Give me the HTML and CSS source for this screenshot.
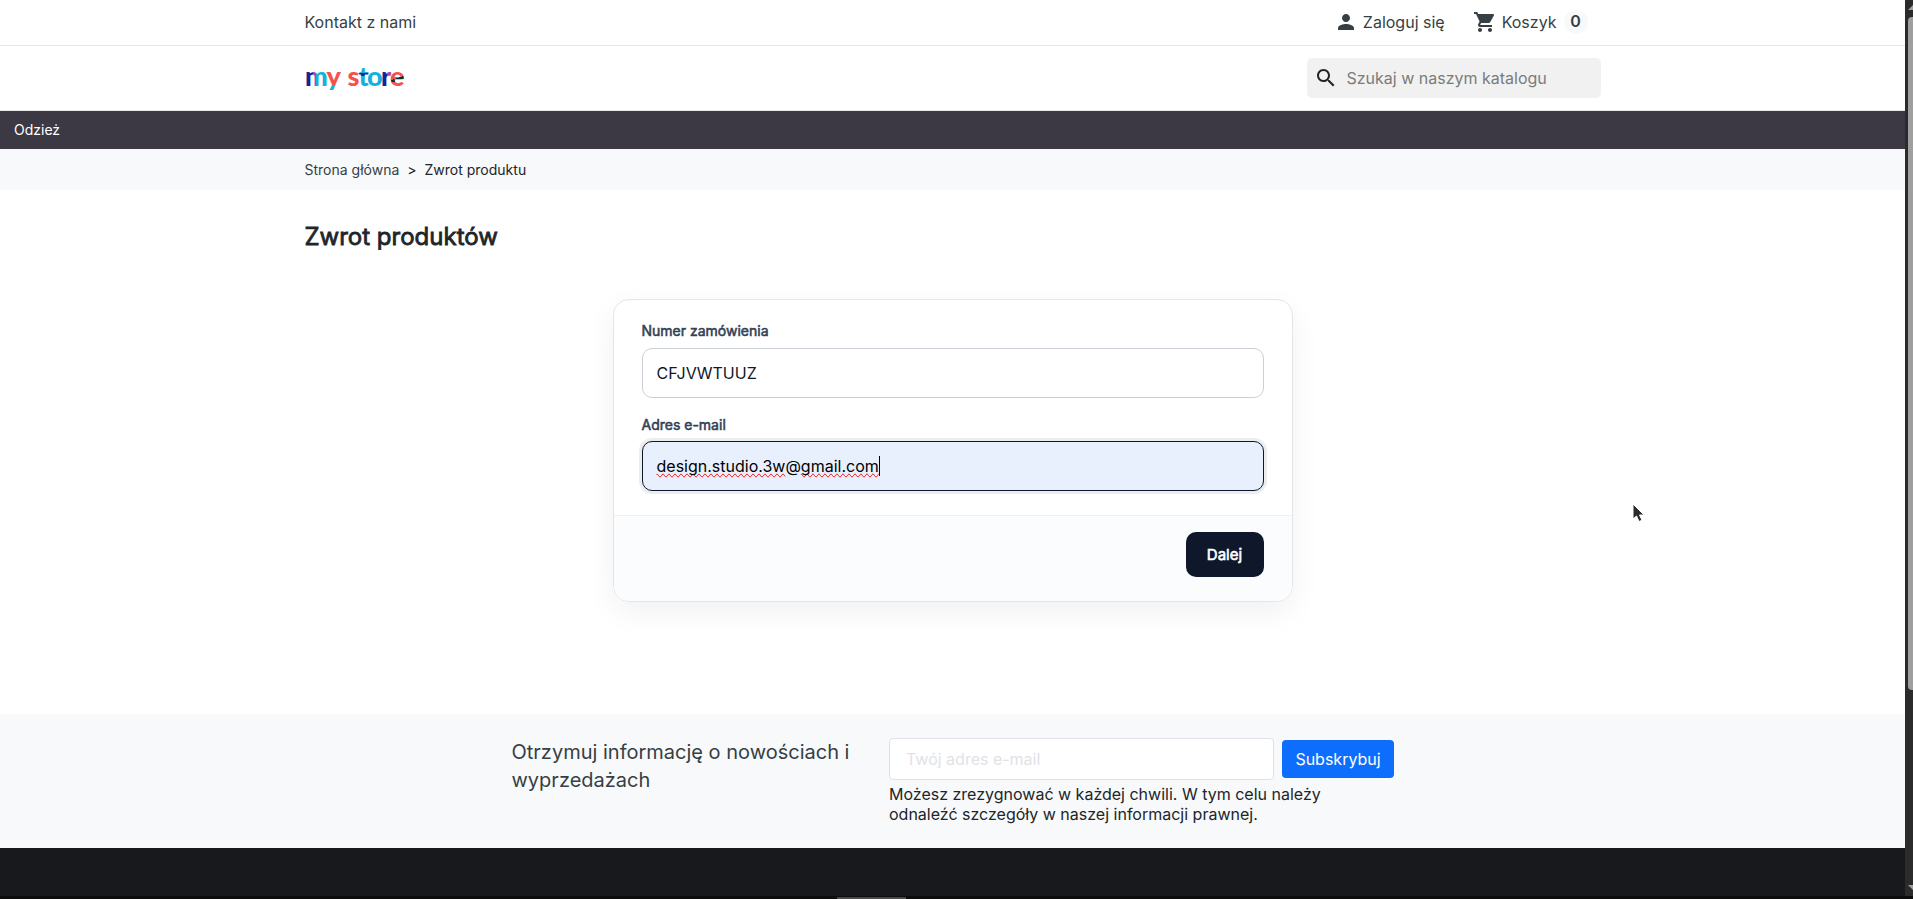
FILE: index.html
```html
<!DOCTYPE html>
<html lang="pl">
<head>
  <meta charset="UTF-8">
  <meta name="viewport" content="width=device-width, initial-scale=1.0">
  <title>Zwrot produktów</title>
  <link rel="stylesheet" href="styles.css">
</head>
<body>
  <div class="window">
    <div class="page">
      <div class="topbar">
        <div class="container">
          <a href="#" class="contact">Kontakt z nami</a>
          <div class="user-links">
            <a href="#" class="login">
              <svg class="icon" viewBox="0 0 24 24"><path d="M12 12c2.21 0 4-1.79 4-4s-1.79-4-4-4-4 1.79-4 4 1.79 4 4 4zm0 2c-2.67 0-8 1.34-8 4v2h16v-2c0-2.66-5.33-4-8-4z"/></svg>
              <span>Zaloguj się</span>
            </a>
            <a href="#" class="cart">
              <svg class="icon" viewBox="0 0 24 24"><path d="M7 18c-1.1 0-1.99.9-1.99 2S5.900 22 7 22s2-.9 2-2-.9-2-2-2zM1 2v2h2l3.600 7.590-1.350 2.450c-.160.280-.250.610-.250.960 0 1.100.9 2 2 2h12v-2H7.420c-.140 0-.250-.110-.250-.250l.030-.120.900-1.630h7.450c.750 0 1.410-.410 1.750-1.030l3.580-6.490c.080-.140.120-.310.120-.480 0-.550-.450-1-1-1H5.210l-.940-2H1zm16 16c-1.100 0-1.990.9-1.990 2s.890 2 1.990 2 2-.9 2-2-.9-2-2-2z"/></svg>
              <span>Koszyk</span>
              <span class="count">0</span>
            </a>
          </div>
        </div>
      </div>

      <header class="header">
        <div class="container">
          <a href="#" class="logo">
            <svg width="104" height="44" viewBox="0 0 104 44">
              <defs>
                <linearGradient id="g-m"><stop offset=".34" stop-color="#12259a"/><stop offset=".34" stop-color="#b23fbf"/><stop offset=".5" stop-color="#b23fbf"/><stop offset=".5" stop-color="#12b2dd"/></linearGradient>
                <linearGradient id="g-y" gradientUnits="userSpaceOnUse" x1="0" y1="14" x2="0" y2="38"><stop offset=".62" stop-color="#f5504c"/><stop offset=".62" stop-color="#12b2dd"/></linearGradient>
                <linearGradient id="g-t" gradientUnits="userSpaceOnUse" x1="0" y1="9" x2="0" y2="29"><stop offset=".38" stop-color="#12b2dd"/><stop offset=".38" stop-color="#12259a"/><stop offset=".54" stop-color="#12259a"/><stop offset=".54" stop-color="#12b2dd"/></linearGradient>
                <linearGradient id="g-r"><stop offset=".5" stop-color="#12259a"/><stop offset=".5" stop-color="#b23fbf"/></linearGradient>
                <linearGradient id="g-e" gradientUnits="userSpaceOnUse" x1="90" y1="18" x2="94" y2="30"><stop offset=".36" stop-color="#f5504c"/><stop offset=".36" stop-color="#06323a"/><stop offset=".56" stop-color="#06323a"/><stop offset=".56" stop-color="#f5504c"/></linearGradient>
              </defs>
              <g class="logo-text">
                <text x="0" y="30" fill="url(#g-m)">m</text>
                <text x="21.500" y="30" fill="url(#g-y)">y</text>
                <text x="42.500" y="30" fill="#f5504c">s</text>
                <text x="53.500" y="30" fill="url(#g-t)">t</text>
                <text x="62" y="30" fill="#12b2dd">o</text>
                <text x="76" y="30" fill="url(#g-r)">r</text>
                <text x="85" y="30" fill="url(#g-e)">e</text>
              </g>
            </svg>
          </a>
          <div class="search">
            <svg class="icon" viewBox="0 0 24 24"><path d="M15.500 14h-.790l-.280-.270C15.410 12.590 16 11.110 16 9.500 16 5.910 13.090 3 9.500 3S3 5.910 3 9.500 5.910 16 9.500 16c1.610 0 3.090-.590 4.230-1.570l.270.280v.790l5 4.990L20.490 19l-4.990-5zm-6 0C7.010 14 5 11.990 5 9.500S7.010 5 9.500 5 14 7.010 14 9.500 11.990 14 9.500 14z"/></svg>
            <input type="text" placeholder="Szukaj w naszym katalogu">
          </div>
        </div>
      </header>

      <nav class="menu"><a href="#">Odzież</a></nav>

      <div class="breadcrumb">
        <div class="container">
          <a href="#">Strona główna</a><span class="sep">&gt;</span><span class="current">Zwrot produktu</span>
        </div>
      </div>

      <main class="main">
        <div class="container">
          <h1>Zwrot produktów</h1>
          <form class="card">
            <div class="card-body">
              <label for="order">Numer zamówienia</label>
              <input type="text" class="field" id="order" value="CFJVWTUUZ">
              <label class="label-email">Adres e-mail</label>
              <div class="field field-focus"><span class="misspelled">design.studio.3w</span>@<span class="misspelled">gmail.com</span><i class="caret"></i></div>
            </div>
            <div class="card-footer">
              <button type="button" class="btn-next">Dalej</button>
            </div>
          </form>
        </div>
      </main>

      <section class="newsletter">
        <p class="newsletter-title">Otrzymuj informację o nowościach i wyprzedażach</p>
        <div class="newsletter-form">
          <div class="newsletter-row">
            <input type="email" placeholder="Twój adres e-mail">
            <button type="button">Subskrybuj</button>
          </div>
          <p>Możesz zrezygnować w każdej chwili. W tym celu należy<br>odnaleźć szczegóły w naszej informacji prawnej.</p>
        </div>
      </section>

      <footer class="footer"></footer>
    </div>
    <div class="scrollbar">
      <div class="arrow-up"></div>
      <div class="thumb"></div>
      <div class="arrow-down"></div>
    </div>
  </div>
  <div class="dock"><div class="dock-handle"></div></div>

  <svg class="cursor" width="14" height="20" viewBox="0 0 14 20"><path d="M1 1v15l3.500-3 2.500 5.500 3-1.300-2.500-5.200h4.500z" fill="#2b2b2b" stroke="#fff" stroke-width="1"/></svg>
</body>
</html>
```

FILE: styles.css
```css
* {
  box-sizing: border-box;
}
body {
  margin: 0;
  height: 899px;
  overflow: hidden;
  font-family: Inter, "Liberation Sans", sans-serif;
  font-size: 16px;
  line-height: 24px;
  color: #212529;
  background: #fff;
}
a {
  color: #363f44;
  text-decoration: none;
}
p, h1 {
  margin: 0;
}
input, button {
  font-family: inherit;
  font-size: 16px;
}
.window {
  display: flex;
  height: 896px;
}
.page {
  width: 1905px;
  display: flex;
  flex-direction: column;
}
.container {
  width: 1320px;
  margin: 0 auto;
  padding: 0 12px;
}
.icon {
  width: 24px;
  height: 24px;
  flex-shrink: 0;
  fill: currentColor;
}

/* top bar */
.topbar {
  height: 46px;
  border-bottom: 1px solid #e6e7e8;
}
.topbar .container {
  height: 44px;
  display: flex;
  justify-content: space-between;
  align-items: center;
}
.user-links {
  display: flex;
  gap: 28px;
  padding-right: 13px;
}
.login, .cart {
  display: flex;
  align-items: center;
}
.login .icon {
  margin-right: 5px;
}
.cart .icon {
  margin-right: 5px;
}
.count {
  width: 24px;
  height: 24px;
  margin-left: 7px;
  border-radius: 50%;
  background: #f8f9fb;
  line-height: 23px;
  text-align: center;
  font-weight: 600;
}

/* header */
.header {
  height: 65px;
  border-bottom: 1px solid #e6e7e8;
}
.header .container {
  height: 64px;
  display: flex;
  justify-content: space-between;
  align-items: center;
}
.logo svg {
  display: block;
  overflow: visible;
}
.logo-text {
  font-family: Lato, sans-serif;
  font-weight: 900;
  font-size: 27px;
}
.search {
  width: 294px;
  height: 40px;
  padding: 0 8px 0 7px;
  display: flex;
  align-items: center;
  background: #f1f1f1;
  border-radius: 5px;
}
.search input {
  flex: 1;
  min-width: 0;
  border: none;
  outline: none;
  background: transparent;
  padding: 0 9px;
}
.search input::placeholder {
  color: #7b7b7b;
}

.menu {
  height: 38px;
  padding-left: 14px;
  background: #3d3944;
  line-height: 38px;
  font-size: 14px;
}
.menu a {
  color: #fff;
}

.breadcrumb {
  height: 41px;
  background: #f8f9fb;
  font-size: 14px;
  line-height: 41px;
}
.sep {
  margin: 0 8px;
}

/* return form */
.main {
  height: 524px;
  padding-top: 29px;
}
h1 {
  font-size: 24px;
  line-height: 36px;
  font-weight: 400;
  -webkit-text-stroke: 0.8px;
}
.card {
  width: 680px;
  margin: 44px auto 0;
  border: 1px solid #e2e6ea;
  border-radius: 16px;
  overflow: hidden;
  box-shadow: 0 10px 30px rgba(15, 23, 42, 0.06);
}
.card-body {
  height: 215px;
  padding: 20px 28px 0;
}
.card label {
  display: block;
  font-size: 14px;
  line-height: 22px;
  font-weight: 400;
  -webkit-text-stroke: 0.55px;
  color: #334155;
  margin-bottom: 6px;
}
.card .label-email {
  margin-bottom: 5px;
}
.field {
  display: block;
  width: 100%;
  height: 50px;
  padding: 0 14px;
  border: 1px solid #cbd0d6;
  border-radius: 10px;
  outline: none;
  line-height: 48px;
  color: #0f172a;
  margin-bottom: 16px;
}
.field-focus {
  display: flex;
  border-color: #0f172a;
  background: #e8f0fe;
  color: #000;
  box-shadow: 0 0 0 3px rgba(15, 23, 42, 0.08);
}
.misspelled {
  text-decoration-line: spelling-error;
}
.caret {
  width: 1px;
  height: 20px;
  margin-top: 14px;
  background: #000;
}
.card-footer {
  height: 86px;
  padding: 16px 28px;
  border-top: 1px solid #edf0f4;
  background: #fafcfe;
  text-align: right;
}
.btn-next {
  width: 78px;
  height: 45px;
  padding: 0;
  border: none;
  border-radius: 10px;
  background: #0f172a;
  color: #fff;
  font-size: 15px;
  font-weight: 400;
  -webkit-text-stroke: 0.6px;
}

/* newsletter */
.newsletter {
  height: 134px;
  padding: 24px 0 0 511.500px;
  display: flex;
  background: #f8f9fb;
}
.newsletter-title {
  width: 377.500px;
  padding-right: 30px;
  font-size: 20px;
  line-height: 28px;
  color: #363f44;
}
.newsletter-row {
  display: flex;
  align-items: center;
  gap: 8px;
  margin-bottom: 4px;
}
.newsletter-row input {
  width: 385px;
  height: 42px;
  padding: 0 16px;
  border: 1px solid #dee2e6;
  border-radius: 4px;
  background: #fff;
}
.newsletter-row input::placeholder {
  color: #dfe2e7;
}
.newsletter-row button {
  width: 112px;
  height: 38px;
  padding: 0;
  border: none;
  border-radius: 4px;
  background: #0d6efd;
  color: #fff;
}
.newsletter-form p {
  line-height: 20px;
}

.footer {
  flex: 1;
  background: #18191c;
}

/* window chrome */
.scrollbar {
  width: 8px;
  padding-left: 3px;
  background: #2b2b2b;
  overflow: hidden;
  display: flex;
  flex-direction: column;
}
.arrow-up, .arrow-down {
  width: 0;
  border: 5px solid transparent;
}
.arrow-up {
  border-top: 0;
  border-bottom-color: #9f9f9f;
  margin: 5px 0 7px;
}
.arrow-down {
  border-bottom: 0;
  border-top-color: #9f9f9f;
  margin-top: auto;
  margin-bottom: 6px;
}
.thumb {
  width: 9px;
  height: 673px;
  border-radius: 4px;
  background: #9f9f9f;
}
.dock {
  height: 3px;
  padding: 1px 0 0 837px;
  background: #0d0d0e;
}
.dock-handle {
  width: 69px;
  height: 2px;
  background: #4a4a4a;
}
.cursor {
  position: absolute;
  left: 1632px;
  top: 503px;
}
```
